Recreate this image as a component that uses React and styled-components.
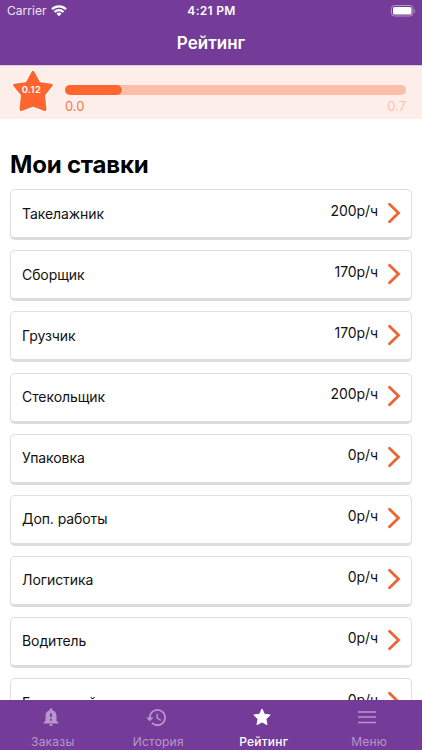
import styled, { createGlobalStyle } from 'styled-components'
import { MdHistory, MdNotificationImportant } from 'react-icons/md'

const GlobalStyle = createGlobalStyle`
    * {
        box-sizing: border-box;
    }
    body {
        margin: 0;
        font-family: Inter, 'Noto Sans', sans-serif;
        color: #111;
        overflow: hidden;
    }
`

/**
 * Styled element for the whole phone screen.
 */
const Screen = styled.div`
    display: flex;
    flex-direction: column;
    height: 750px;
    background: #fff;
`

/**
 * Styled header with the status bar and the page title.
 */
const Header = styled.header`
    flex: none;
    height: 65px;
    background: #743c98;
    color: #fff;
`

const StatusBar = styled.div`
    display: grid;
    grid-template-columns: 1fr auto 1fr;
    align-items: center;
    height: 21px;
    padding: 0 6px 0 7px;
    font-size: 12px;
`

const Carrier = styled.span`
    display: flex;
    align-items: center;
    gap: 4px;
    color: #eee6f3;
    letter-spacing: 0.05px;
`

const Clock = styled.span`
    font-weight: 600;
    letter-spacing: 0.3px;
`

const BatteryIcon = styled.svg`
    justify-self: end;
`

const PageTitle = styled.h1`
    margin: 0;
    padding-top: 12px;
    font-size: 17px;
    line-height: 20px;
    font-weight: 600;
    text-align: center;
`

/**
 * Styled section for the rating progress.
 */
const RatingPanel = styled.section`
    display: flex;
    flex: none;
    height: 54px;
    padding: 0 16px 0 9px;
    background: #fdeeea;
    border-top: 1px solid #dccbe6;
`

const StarBadge = styled.div`
    display: grid;
    width: 48px;
    height: 53px;
    margin-right: 8px;
`

const BadgeStar = styled.svg`
    grid-area: 1 / 1;
`

const BadgeValue = styled.span`
    grid-area: 1 / 1;
    z-index: 1;
    padding: 18px 3px 0 0;
    font-size: 9.5px;
    line-height: 12px;
    font-weight: 600;
    letter-spacing: 0.4px;
    text-align: center;
    color: #fff;
`

const Progress = styled.div`
    flex: 1;
    padding-top: 19px;
`

const Track = styled.div`
    height: 10px;
    border-radius: 5px;
    background: #fdbea8;
`

const Fill = styled.div`
    height: 10px;
    border-radius: 5px;
    background: #fe652f;
    box-shadow: 1px 0 0 #fdd5c6;
`

const Limits = styled.div`
    display: flex;
    justify-content: space-between;
    padding-top: 3px;
    font-size: 13px;
    line-height: 16px;
    color: #f47950;
`

const MaxLimit = styled.span`
    color: #fbc3b0;
`

/**
 * Styled main element, the list goes under the tab bar.
 */
const Main = styled.main`
    flex: 1;
    min-height: 0;
    padding: 31px 10px 0 10px;
    overflow: hidden;
`

const ListTitle = styled.h2`
    margin: 0 0 9.3px;
    font-size: 24px;
    line-height: 30px;
    font-weight: 700;
    letter-spacing: -0.2px;
    color: #000;
`

const RateList = styled.ul`
    display: flex;
    flex-direction: column;
    gap: 10.1px;
    margin: 0;
    padding: 0;
    list-style: none;
`

const RateCard = styled.li`
    display: flex;
    align-items: center;
    height: 51px;
    padding: 0 10px 0 11px;
    border: 1px solid #dedede;
    border-bottom: 3px solid #dcdcdc;
    border-radius: 5px;
    font-size: 14px;
    line-height: 18px;
    letter-spacing: -0.08px;
`

const RateName = styled.span`
    flex: 1;
`

const RatePrice = styled.span`
    padding-bottom: 6px;
    margin-right: 9px;
`

const Chevron = styled.svg`
    position: relative;
    top: -1px;
`

/**
 * Styled nav element for the bottom tabs.
 */
const TabBar = styled.nav`
    display: grid;
    grid-template-columns: repeat(4, 1fr);
    flex: none;
    height: 50px;
    background: #743c98;
`

const Tab = styled.a`
    display: flex;
    flex-direction: column;
    align-items: center;
    padding-top: 6px;
    font-size: 12px;
    line-height: 15px;
    letter-spacing: 0.2px;
    font-weight: ${({ $active }) => ($active ? 500 : 400)};
    color: ${({ $active }) => ($active ? '#fff' : '#b895cd')};
`

const TabIcon = styled.span`
    display: flex;
    align-items: center;
    justify-content: center;
    height: 22px;
    padding-right: 4px;
    margin-bottom: 6px;
`

const rates = [
    { name: 'Такелажник', price: 200 },
    { name: 'Сборщик', price: 170 },
    { name: 'Грузчик', price: 170 },
    { name: 'Стекольщик', price: 200 },
    { name: 'Упаковка', price: 0 },
    { name: 'Доп. работы', price: 0 },
    { name: 'Логистика', price: 0 },
    { name: 'Водитель', price: 0 },
    { name: 'Бригадный человек', price: 0 },
]

const StarIcon = () => (
    <svg width="20" height="20" viewBox="0 0 20 20">
        <path d="M10 2l2.400 5.300 5.800.7-4.300 4 1.100 5.700-5-2.800-5 2.800L6.100 12l-4.300-4 5.800-.7z" fill="currentColor" stroke="currentColor" strokeLinejoin="round" />
    </svg>
)

const MenuIcon = () => (
    <svg width="20" height="20" viewBox="0 0 20 20">
        <path d="M1 5h18M1 10h18M1 15.500h18" stroke="currentColor" strokeWidth="1.600" />
    </svg>
)

const tabs = [
    { label: 'Заказы', icon: <MdNotificationImportant size={22} /> },
    { label: 'История', icon: <MdHistory size={23} /> },
    { label: 'Рейтинг', icon: <StarIcon />, active: true },
    { label: 'Меню', icon: <MenuIcon /> },
]

/**
 * Function component App - Represent the rating page
 * @returns {JSX.Element} The rendered page.
 */
const App = () => {
    return (
        <Screen>
            <GlobalStyle />
            <Header>
                <StatusBar>
                    <Carrier>
                        Carrier
                        <svg width="16" height="12" viewBox="0 0 16 12" fill="none" stroke="#fff" strokeWidth="2.200">
                            <path d="M1 4.200a10 10 0 0 1 14 0M3.500 7a6.300 6.300 0 0 1 9 0" />
                            <path d="M8 11.300L5.500 8.800a3.500 3.500 0 0 1 5 0z" fill="#fff" stroke="none" />
                        </svg>
                    </Carrier>
                    <Clock>4:21 PM</Clock>
                    <BatteryIcon width="25" height="12" viewBox="0 0 25 12">
                        <rect x=".5" y=".5" width="21.500" height="10.500" rx="3" fill="none" stroke="#b596c8" />
                        <rect x="2" y="2" width="18.500" height="7.500" rx="1.500" fill="#fff" />
                        <path d="M23.300 4v4c1.300-.5 1.300-3.500 0-4z" fill="#b596c8" />
                    </BatteryIcon>
                </StatusBar>
                <PageTitle>Рейтинг</PageTitle>
            </Header>
            <RatingPanel>
                <StarBadge>
                    <BadgeStar width="48" height="53" viewBox="0 0 48 53">
                        <path
                            d="M22 5.500Q24 2.500 26 5.500L31.500 15.500L42.500 17Q46 18 44 20.500L36.800 29.500L38.200 43Q38 46.500 34.500 45.500L24 41.500L13.500 45.500Q10 46.500 9.800 43L11.200 29.500L3.800 20.500Q1.800 18 5.300 17L16.500 15.500Z"
                            fill="#fe652f"
                            stroke="#fff8f5"
                            strokeWidth="1.500"
                            strokeLinejoin="round"
                        />
                    </BadgeStar>
                    <BadgeValue>0.12</BadgeValue>
                </StarBadge>
                <Progress>
                    <Track>
                        <Fill style={{ width: `${(0.12 / 0.7) * 98}%` }} />
                    </Track>
                    <Limits>
                        <span>0.0</span>
                        <MaxLimit>0.7</MaxLimit>
                    </Limits>
                </Progress>
            </RatingPanel>
            <Main>
                <ListTitle>Мои ставки</ListTitle>
                <RateList>
                    {rates.map(({ name, price }) => (
                        <RateCard key={name}>
                            <RateName>{name}</RateName>
                            <RatePrice>{price}р/ч</RatePrice>
                            <Chevron width="14" height="22" viewBox="0 0 14 22" fill="none" stroke="#ed6535" strokeWidth="2.800" strokeLinecap="round">
                                <path d="M2.500 2.200l9 8.800-9 8.800" />
                            </Chevron>
                        </RateCard>
                    ))}
                </RateList>
            </Main>
            <TabBar>
                {tabs.map(({ label, icon, active }) => (
                    <Tab key={label} $active={active}>
                        <TabIcon>{icon}</TabIcon>
                        {label}
                    </Tab>
                ))}
            </TabBar>
        </Screen>
    )
}

export default App
